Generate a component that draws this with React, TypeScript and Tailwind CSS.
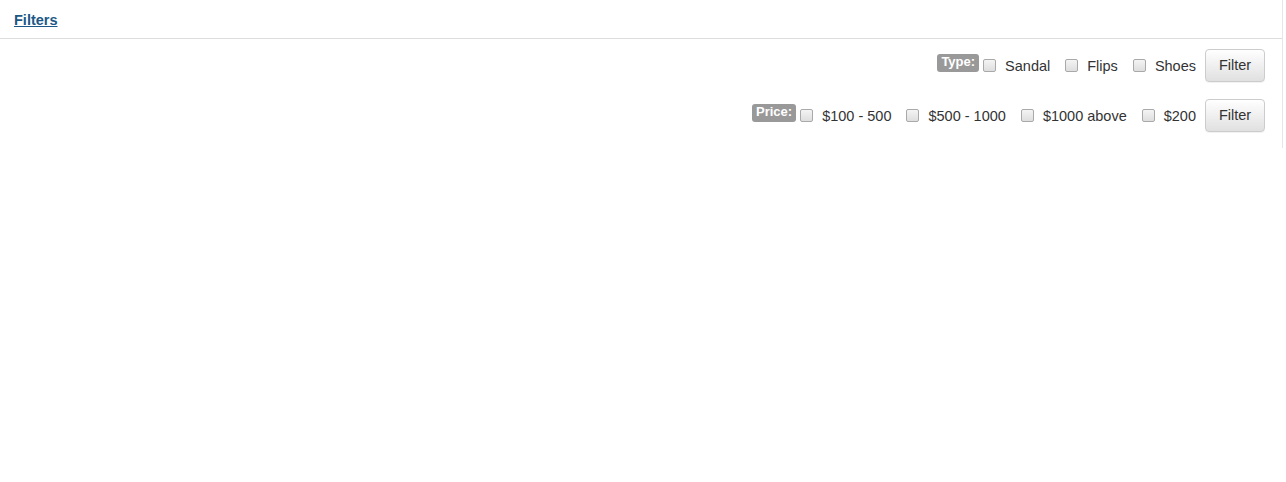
import React from 'react';

const Check: React.FC = () => (
  <span className="inline-block w-[13px] h-[13px] rounded-[2px] border border-[#a9a9a9] bg-gradient-to-b from-[#f4f4f4] to-[#dedede] shrink-0" />
);

const FilterButton: React.FC = () => (
  <button className="h-[33px] w-[60px] rounded-[4px] border border-[#cccccc] bg-gradient-to-b from-white to-[#e0e0e0] text-[14.5px] text-[#333333] shadow-[0_1px_0_rgba(0,0,0,0.05)]">
    Filter
  </button>
);

interface FilterRowProps {
  label: string;
  options: string[];
}

const FilterRow: React.FC<FilterRowProps> = ({ label, options }) => (
  <div className="flex items-center justify-end">
    <span className="mb-[5px] h-[18px] rounded-[3px] bg-[#999999] px-[4px] text-[13px] font-bold leading-[16px] text-white">
      {label}
    </span>
    {options.map((opt, i) => (
      <div key={opt} className={`flex items-center ${i === 0 ? 'ml-[4px]' : 'ml-[15px]'}`}>
        <Check />
        <span className="ml-[9px] pt-[2px] text-[14.5px] text-[#333333]">{opt}</span>
      </div>
    ))}
    <div className="ml-[9px]">
      <FilterButton />
    </div>
  </div>
);

export default function App() {
  return (
    <div className="w-[1283px] border-r border-[#e6e6e6] bg-white font-['Liberation_Sans',Arial,sans-serif]">
      <div className="h-[39px] border-b border-[#dddddd] pl-[14px] pt-[8px]">
        <a href="#" className="text-[14.5px] font-bold text-[#1c5886] underline leading-[20px]">
          Filters
        </a>
      </div>
      <div className="flex flex-col gap-[17px] pt-[10px] pb-[16px] pr-[17px]">
        <FilterRow label="Type:" options={['Sandal', 'Flips', 'Shoes']} />
        <FilterRow label="Price:" options={['$100 - 500', '$500 - 1000', '$1000 above', '$200']} />
      </div>
    </div>
  );
}
